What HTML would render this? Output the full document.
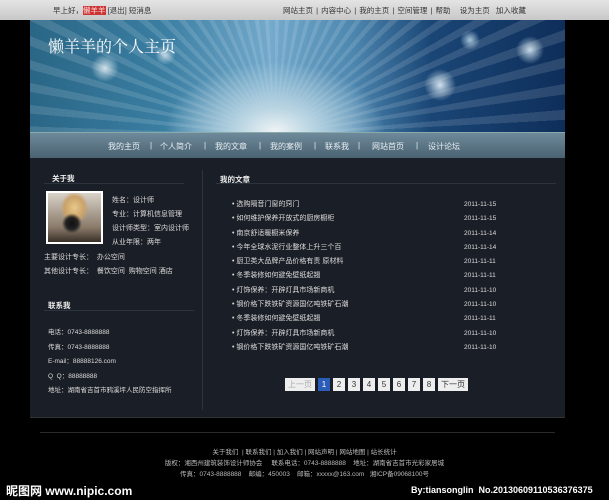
<!DOCTYPE html>
<html><head><meta charset="utf-8"><style>
*{margin:0;padding:0;box-sizing:border-box}
body{width:609px;height:500px;background:#000;font-family:"Liberation Sans","Noto Sans CJK SC",sans-serif;color:#ddd;position:relative;overflow:hidden;font-size:7px}
.a{position:absolute;white-space:nowrap}
#top{left:0;top:0;width:609px;height:20px;background:linear-gradient(#e4e4e4,#c8c8c8);color:#333;font-size:7.5px}
#banner{left:30px;top:20px;width:535px;height:112px;overflow:hidden;
background:radial-gradient(ellipse 110px 70px at 245px 112px,#f0f4f6 0%,#b8d4e2 35%,transparent 100%),
repeating-conic-gradient(from 0deg at 245px 115px,rgba(255,255,255,.12) 0deg 2deg,rgba(255,255,255,0) 2deg 5deg),
radial-gradient(circle 14px at 75px 48px,#c8dce6 0,transparent 100%),
radial-gradient(circle 10px at 135px 35px,#b8d0de 0,transparent 100%),
radial-gradient(circle 16px at 410px 65px,#d0e2ec 0,transparent 100%),
radial-gradient(circle 14px at 500px 30px,#c0d6e4 0,transparent 100%),
radial-gradient(circle 10px at 440px 20px,#a8c6da 0,transparent 100%),
linear-gradient(90deg,#2a6686 0%,#3a7ea2 25%,#74aacc 45%,#4e88b0 60%,#1a4676 75%,#0e2e5a 100%)}
#nav{left:30px;top:132px;width:535px;height:26px;background:linear-gradient(#6e8a9a,#4a6272);border-top:1px solid #8aa;font-size:8px;color:#e8eef2}
#main{left:30px;top:158px;width:535px;height:260px;background:#1a1e26;border-bottom:1px solid #333}
.h{font-weight:bold;font-size:7.5px;color:#eee}
.line{height:1px;background:#2c3440}
.pg{display:inline-block;height:13px;line-height:13px;text-align:center;background:#eee;color:#333;font-size:8px;margin-right:3px;padding:0 3px;vertical-align:top}
.ft{color:#bbb;font-size:6.5px;left:0;width:609px;text-align:center}
</style></head><body>
<div id="top" class="a">
<span class="a" style="left:53px;top:5px">早上好，<span style="background:#c33;color:#fdd">懒羊羊</span> [退出] 短消息</span>
<span class="a" style="left:283px;top:5px;word-spacing:1px">网站主页 | 内容中心 | 我的主页 | 空间管理 | 帮助 &nbsp; 设为主页 &nbsp;加入收藏</span>
</div>
<div id="banner" class="a"><span class="a" style="left:18px;top:14px;font-size:16px;color:#fff;font-family:'Noto Serif CJK SC',serif">懒羊羊的个人主页</span></div>
<div id="nav" class="a">
<span class="a" style="left:78px;top:8px">我的主页</span><span class="a" style="left:120px;top:8px">|</span>
<span class="a" style="left:130px;top:8px">个人简介</span><span class="a" style="left:174px;top:8px">|</span>
<span class="a" style="left:185px;top:8px">我的文章</span><span class="a" style="left:229px;top:8px">|</span>
<span class="a" style="left:240px;top:8px">我的案例</span><span class="a" style="left:284px;top:8px">|</span>
<span class="a" style="left:295px;top:8px">联系我</span><span class="a" style="left:328px;top:8px">|</span>
<span class="a" style="left:342px;top:8px">网站首页</span><span class="a" style="left:386px;top:8px">|</span>
<span class="a" style="left:398px;top:8px">设计论坛</span>
</div>
<div id="main" class="a">
<div class="a" style="left:172px;top:12px;width:1px;height:240px;background:#2c3440"></div>
<span class="a h" style="left:22px;top:15px">关于我</span>
<div class="a line" style="left:14px;top:25px;width:140px"></div>
<div class="a" style="left:16px;top:33px;width:57px;height:53px;background:#fff;padding:2px">
<div style="width:100%;height:100%;background:radial-gradient(circle 10px at 45% 62%,#111 0,#222 60%,transparent 100%),radial-gradient(ellipse 14px 16px at 50% 30%,#e7c88a 0,#caa26a 70%,transparent 100%),linear-gradient(#d8d2c8,#8a7a6a 70%,#3a3028)"></div></div>
<div class="a" style="left:82px;top:36px;line-height:14px">姓名：设计师<br>专业：计算机信息管理<br>设计师类型：室内设计师<br>从业年限：两年</div>
<div class="a" style="left:14px;top:93px;line-height:14px">主要设计专长： &nbsp;办公空间<br>其他设计专长： &nbsp;餐饮空间 &nbsp;购物空间 酒店</div>
<span class="a h" style="left:18px;top:142px">联系我</span>
<div class="a line" style="left:14px;top:152px;width:150px"></div>
<div class="a" style="left:18px;top:168px;line-height:14.5px;font-size:6.5px">电话：0743-8888888<br>传真：0743-8888888<br>E-mail：88888126.com<br>Q &nbsp;Q：88888888<br>地址：湖南省吉首市鸦溪坪人民防空指挥所</div>
<span class="a h" style="left:190px;top:16px">我的文章</span>
<div class="a line" style="left:186px;top:25px;width:340px"></div>
<div class="a" style="left:202px;top:40px;line-height:14.3px;font-size:7px">• 选购隔音门窗的窍门<br>• 如何维护保养开放式的厨房橱柜<br>• 南京舒适暖橱米保养<br>• 今年全球水泥行业整体上升三个百<br>• 厨卫类大品牌产品价格有责 原材料<br>• 冬季装修如何避免壁纸起翘<br>• 灯饰保养：开辟灯具市场新商机<br>• 钢价格下跌铁矿资源国亿吨铁矿石潮<br>• 冬季装修如何避免壁纸起翘<br>• 灯饰保养：开辟灯具市场新商机<br>• 钢价格下跌铁矿资源国亿吨铁矿石潮</div>
<div class="a" style="left:434px;top:40px;line-height:14.3px;font-size:6.5px">2011-11-15<br>2011-11-15<br>2011-11-14<br>2011-11-14<br>2011-11-11<br>2011-11-11<br>2011-11-10<br>2011-11-10<br>2011-11-11<br>2011-11-10<br>2011-11-10</div>
<div class="a" style="left:255px;top:220px"><span class="pg" style="width:30px;color:#aaa">上一页</span><span class="pg" style="background:#2a5cb8;color:#fff;width:12px">1</span><span class="pg" style="width:12px">2</span><span class="pg" style="width:12px">3</span><span class="pg" style="width:12px">4</span><span class="pg" style="width:12px">5</span><span class="pg" style="width:12px">6</span><span class="pg" style="width:12px">7</span><span class="pg" style="width:12px">8</span><span class="pg" style="width:30px">下一页</span></div>
</div>
<div class="a" style="left:40px;top:432px;width:515px;height:1px;background:#2a2a2a"></div>
<div class="a ft" style="top:446px">关于我们 &nbsp;| 联系我们 | 加入我们 | 网站声明 | 网站地图 | 站长统计</div>
<div class="a ft" style="top:457px">版权：湘西州建筑装饰设计师协会 &nbsp; &nbsp; 联系电话：0743-8888888 &nbsp; &nbsp;地址：湖南省吉首市光彩家居城</div>
<div class="a ft" style="top:468px">传真：0743-8888888 &nbsp; &nbsp;邮编：450003 &nbsp; &nbsp;邮箱：xxxxx@163.com &nbsp; 湘ICP备09068100号</div>
<span class="a" style="left:6px;top:482px;font-size:12px;font-weight:bold;color:#fff">昵图网 www.nipic.com</span>
<span class="a" style="left:411px;top:485px;font-size:9px;font-weight:bold;color:#fff">By:tiansonglin &nbsp;No.20130609110536376375</span>
</body></html>
